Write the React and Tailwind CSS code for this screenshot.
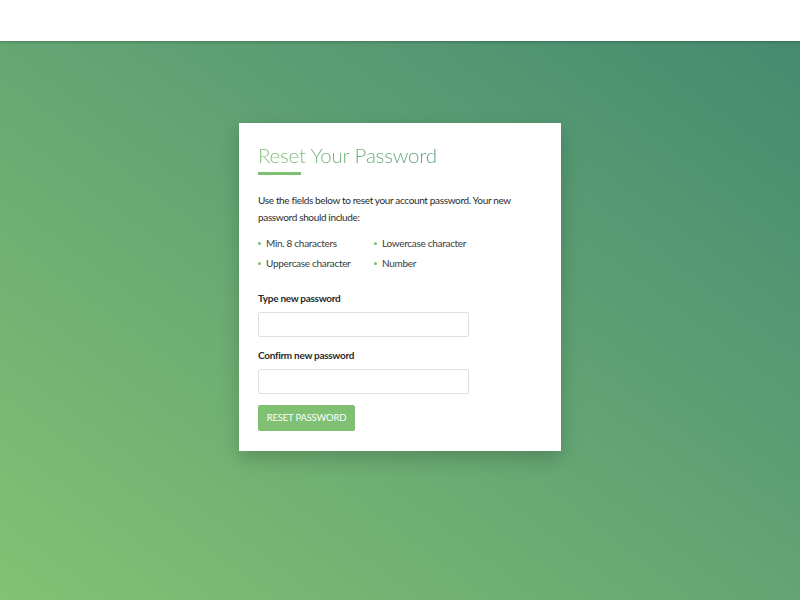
import React from "react";

const rules = [
  ["Min. 8 characters", "Lowercase character"],
  ["Uppercase character", "Number"],
];

function Bullet({ children }) {
  return (
    <li className="flex items-center gap-[5px] h-[20px]">
      <span className="w-[3px] h-[3px] rounded-full bg-[#7fc072]" />
      <span>{children}</span>
    </li>
  );
}

export default function App() {
  return (
    <div
      className="w-[800px] h-[600px] flex flex-col bg-gradient-to-tr from-[#82c273] to-[#448870] overflow-hidden"
      style={{ fontFamily: "Lato, 'Open Sans', sans-serif" }}
    >
      <header className="h-[41px] shrink-0 bg-white shadow-[0_1px_3px_rgba(0,0,0,0.25)] relative z-10" />

      <main className="flex-1 flex justify-center pt-[82px]">
        <div className="w-[322px] h-[328px] bg-white shadow-[0_8px_18px_rgba(0,0,0,0.18)] px-[19px] pt-[18px]">
          <h1 className="text-[20.5px] font-light leading-[28px] tracking-[-0.2px] bg-gradient-to-r from-[#80c073] to-[#579878] bg-clip-text text-transparent inline-block">
            Reset Your Password
          </h1>
          <div className="w-[43px] h-[3px] bg-[#7fc072] mt-[3px]" />

          <p className="mt-[17px] text-[10px] leading-[17px] tracking-[-0.35px] text-[#2b2b2b]">
            Use the fields below to reset your account password. Your new
            password should include:
          </p>

          <div className="mt-[7px] flex text-[10px] tracking-[-0.3px] text-[#3a3a3a]">
            <ul className="w-[116px]">
              <Bullet>{rules[0][0]}</Bullet>
              <Bullet>{rules[1][0]}</Bullet>
            </ul>
            <ul>
              <Bullet>{rules[0][1]}</Bullet>
              <Bullet>{rules[1][1]}</Bullet>
            </ul>
          </div>

          <label className="block mt-[18px] text-[10px] font-bold tracking-[-0.3px] text-[#2b2b2b] leading-[14px]">
            Type new password
          </label>
          <input
            type="password"
            className="block mt-[7px] w-[211px] h-[25px] border border-[#e0e0e0] rounded-[2px] outline-none"
          />

          <label className="block mt-[11px] text-[10px] font-bold tracking-[-0.3px] text-[#2b2b2b] leading-[14px]">
            Confirm new password
          </label>
          <input
            type="password"
            className="block mt-[7px] w-[211px] h-[25px] border border-[#e0e0e0] rounded-[2px] outline-none"
          />

          <button className="block mt-[11px] w-[97px] h-[26px] bg-[#7fc072] text-white text-[9.5px] uppercase rounded-[2px] tracking-[-0.2px]">
            Reset Password
          </button>
        </div>
      </main>
    </div>
  );
}
